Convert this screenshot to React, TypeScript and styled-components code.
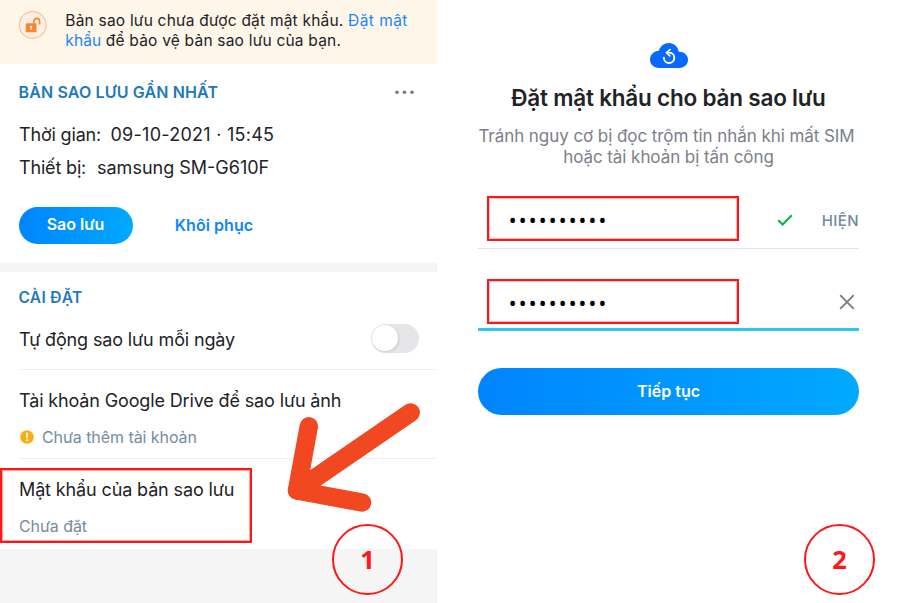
import React from 'react';
import styled, { createGlobalStyle, css } from 'styled-components';

const GlobalStyle = createGlobalStyle`
  * { box-sizing: border-box; }
  body {
    margin: 0;
    background: #fff;
    font-family: Inter, "Noto Sans", sans-serif;
    color: #222326;
  }
`;

const Screen = styled.div`
  position: relative;
  display: grid;
  grid-template-columns: 437px 463px;
  width: 900px;
  height: 603px;
  overflow: hidden;
`;

const BackupPanel = styled.section`
  display: flex;
  flex-direction: column;
  background: #f5f5f5;
`;

const Banner = styled.div`
  display: flex;
  height: 64px;
  padding: 11px 0 0 18px;
  background: #fef6e9;
`;

const LockBadge = styled.svg`
  flex: none;
  width: 30px;
  height: 30px;
  margin-right: 17.3px;
`;

const BannerText = styled.p`
  margin: 0;
  font-size: 15.5px;
  line-height: 19.5px;
  letter-spacing: 0.21px;
  white-space: nowrap;
`;

const BannerLink = styled.a<{ $track: number }>`
  color: #1a87f5;
  letter-spacing: ${(p) => p.$track}px;
`;

const Card = styled.div<{ $height: number; $top: number; $gap?: number }>`
  display: flex;
  flex-direction: column;
  height: ${(p) => p.$height}px;
  margin-top: ${(p) => p.$gap ?? 0}px;
  padding: ${(p) => p.$top}px 0 0 19px;
  background: #fff;
`;

const CardHeader = styled.div`
  display: flex;
  justify-content: space-between;
  align-items: center;
  padding-right: 23px;
  margin-bottom: 21px;
`;

const SectionTitle = styled.h2<{ $size: number; $track: number }>`
  margin: 0 0 0 -0.5px;
  font-size: ${(p) => p.$size}px;
  font-weight: 600;
  line-height: 20px;
  letter-spacing: ${(p) => p.$track}px;
  color: #2079ba;
`;

const MoreIcon = styled.svg`
  width: 19px;
  height: 5px;
`;

const InfoLine = styled.div`
  display: flex;
  height: 24px;
  margin-bottom: 9px;
  font-size: 18px;
  line-height: 24px;
  white-space: nowrap;
`;

const InfoLabel = styled.span<{ $width: number }>`
  width: ${(p) => p.$width}px;
  letter-spacing: -0.17px;
`;

const InfoValue = styled.span<{ $track?: number }>`
  letter-spacing: ${(p) => p.$track ?? 0}px;
`;

const Actions = styled.div`
  display: flex;
  align-items: center;
  margin-top: 17.5px;
`;

const pill = css`
  border: 0;
  border-radius: 24px;
  background: linear-gradient(90deg, #0084ff, #00a9ff);
  color: #fff;
  font: 600 16px Inter, "Noto Sans", sans-serif;
`;

const BackupButton = styled.button`
  ${pill}
  width: 114px;
  height: 37.5px;
  padding: 0 1px 2px 0;
`;

const RestoreButton = styled.button`
  border: 0;
  padding: 0;
  margin-left: 41.8px;
  background: none;
  color: #1286f7;
  font: 600 16px Inter, "Noto Sans", sans-serif;
  letter-spacing: 0.05px;
`;

const SettingRow = styled.div<{ $last?: boolean }>`
  display: flex;
  flex-direction: column;
  height: 90px;
  padding-top: 19px;
  border-bottom: ${(p) => (p.$last ? '0' : '1px solid #efeff1')};
`;

const ToggleRow = styled.div`
  display: flex;
  align-items: center;
  justify-content: space-between;
  height: 62px;
  padding-right: 18.5px;
  border-bottom: 1px solid #efeff1;
`;

const SettingName = styled.div<{ $track?: number; $drop?: number }>`
  padding-top: ${(p) => p.$drop ?? 0}px;
  font-size: 18px;
  line-height: 24px;
  letter-spacing: ${(p) => p.$track ?? -0.14}px;
  white-space: nowrap;
`;

const SettingState = styled.div`
  display: flex;
  align-items: center;
  gap: 8px;
  margin-top: 13px;
  font-size: 16px;
  line-height: 22px;
  letter-spacing: -0.07px;
  color: #768ca1;
`;

const WarnIcon = styled.svg`
  width: 14px;
  height: 14px;
  margin-left: 1px;
`;

const Toggle = styled.div`
  display: flex;
  align-items: center;
  width: 47.5px;
  height: 29px;
  padding-left: 1px;
  border-radius: 15px;
  background: #e6e6e8;
`;

const Knob = styled.div`
  width: 26px;
  height: 26px;
  border-radius: 50%;
  background: #fff;
  box-shadow: 1px 1px 3px rgba(0, 0, 0, 0.12);
`;

const PasswordPanel = styled.section`
  display: flex;
  flex-direction: column;
  align-items: center;
  padding: 43px 41px 0;
  background: #fff;
`;

const CloudIcon = styled.svg`
  width: 38px;
  height: 25px;
`;

const Heading = styled.h1`
  margin: 16px 0 14px;
  font-size: 22.5px;
  font-weight: 600;
  line-height: 28px;
  letter-spacing: -0.21px;
  white-space: nowrap;
`;

const Hint = styled.p`
  margin: 0 0 0 -4px;
  font-size: 17px;
  line-height: 21px;
  letter-spacing: -0.065px;
  text-align: center;
  white-space: nowrap;
  color: #7b7f89;
`;

const HintLine = styled.span<{ $shift?: number }>`
  display: block;
  padding-left: ${(p) => p.$shift ?? 0}px;
`;

const Field = styled.div<{ $active?: boolean }>`
  display: flex;
  align-items: flex-start;
  width: 381px;
  height: ${(p) => (p.$active ? 52 : 53)}px;
  margin-top: ${(p) => (p.$active ? 30 : 28)}px;
  padding-left: 9px;
  border-bottom: ${(p) => (p.$active ? '3px solid #2bc9ee' : '1px solid #e3e3e5')};
`;

const Frame = styled.div`
  display: flex;
  align-items: center;
  width: 252px;
  height: 45px;
  padding-left: 19.5px;
  border: 2px solid #ff1616;
  box-shadow: inset 0 0 0 1px rgba(255, 22, 22, 0.3);
`;

const Masked = styled.span`
  padding-top: 1px;
  font-family: "Open Sans", sans-serif;
  font-size: 22px;
  line-height: 22px;
  letter-spacing: 1.71px;
  color: #000;
`;

const CheckIcon = styled.svg`
  width: 16px;
  height: 12px;
  margin: 18px 0 0 38px;
`;

const ShowButton = styled.button`
  border: 0;
  padding: 0;
  margin: 15px 0 0 auto;
  background: none;
  color: #7189a0;
  font: 500 15px Inter, "Noto Sans", sans-serif;
  letter-spacing: 0.4px;
`;

const ClearIcon = styled.svg`
  width: 16px;
  height: 16px;
  margin: 14.5px 4px 0 auto;
`;

const ContinueButton = styled.button`
  ${pill}
  width: 381px;
  height: 47px;
  margin-top: 37px;
  padding: 0 0 1px;
`;

const Highlight = styled.div`
  position: absolute;
  left: 0;
  top: 468px;
  width: 252px;
  height: 75px;
  border: 2px solid #ff1616;
  box-shadow: inset 0 0 0 1px rgba(255, 22, 22, 0.4);
`;

const Arrow = styled.svg`
  position: absolute;
  left: 280px;
  top: 396px;
  width: 148px;
  height: 124px;
`;

const StepBadge = styled.div<{ $left: number; $top: number }>`
  position: absolute;
  left: ${(p) => p.$left}px;
  top: ${(p) => p.$top}px;
  display: flex;
  align-items: center;
  justify-content: center;
  width: 71px;
  height: 71px;
  padding-bottom: 2px;
  border: 2px solid #ff1616;
  border-radius: 50%;
  background: ${(p) => (p.$left > 437 ? '#fff' : 'linear-gradient(#fff 23px, #f5f5f5 23px)')};
  color: #ff1616;
  font: 700 25.5px "Open Sans", sans-serif;
`;

const MASK = '•'.repeat(10);

export default function App() {
  return (
    <Screen>
      <GlobalStyle />
      <BackupPanel>
        <Banner>
          <LockBadge viewBox="0 0 30 30">
            <circle cx="14.7" cy="14" r="13.4" fill="#fdeee4" stroke="#f8c09a" strokeWidth="1.1" />
            <rect x="7.8" y="12.3" width="10.7" height="9" rx="0.9" fill="#f6862f" />
            <path d="M16 12.6V10.2a2.8 2.8 0 0 1 5.6 0v3.2" fill="none" stroke="#f6862f" strokeWidth="1.6" />
            <circle cx="13.1" cy="15.8" r="1.1" fill="#fff" />
            <rect x="12.6" y="16" width="1" height="3" fill="#fff" />
          </LockBadge>
          <BannerText>
            Bản sao lưu chưa được đặt mật khẩu. <BannerLink $track={0.45}>Đặt mật</BannerLink>
            <br />
            <BannerLink $track={0.1}>khẩu</BannerLink> để bảo vệ bản sao lưu của bạn.
          </BannerText>
        </Banner>

        <Card $height={199} $top={18}>
          <CardHeader>
            <SectionTitle $size={16} $track={0.14}>BẢN SAO LƯU GẦN NHẤT</SectionTitle>
            <MoreIcon viewBox="0 0 19 5" fill="#757a82">
              <circle cx="2" cy="2.2" r="1.8" />
              <circle cx="9.5" cy="2.2" r="1.8" />
              <circle cx="17" cy="2.2" r="1.8" />
            </MoreIcon>
          </CardHeader>
          <InfoLine>
            <InfoLabel $width={91.5}>Thời gian:</InfoLabel>
            <InfoValue $track={0.26}>09-10-2021 · 15:45</InfoValue>
          </InfoLine>
          <InfoLine>
            <InfoLabel $width={78}>Thiết bị:</InfoLabel>
            <InfoValue>samsung SM-G610F</InfoValue>
          </InfoLine>
          <Actions>
            <BackupButton>Sao lưu</BackupButton>
            <RestoreButton>Khôi phục</RestoreButton>
          </Actions>
        </Card>

        <Card $height={277} $top={16} $gap={9}>
          <SectionTitle $size={15.5} $track={0.3}>CÀI ĐẶT</SectionTitle>
          <ToggleRow>
            <SettingName $drop={3}>Tự động sao lưu mỗi ngày</SettingName>
            <Toggle>
              <Knob />
            </Toggle>
          </ToggleRow>
          <SettingRow>
            <SettingName>Tài khoản Google Drive để sao lưu ảnh</SettingName>
            <SettingState>
              <WarnIcon viewBox="0 0 14 14">
                <circle cx="7" cy="7" r="6.8" fill="#f9ae13" />
                <path d="M7 3.3v4.4" stroke="#fff" strokeWidth="1.6" strokeLinecap="round" />
                <circle cx="7" cy="10.2" r="0.95" fill="#fff" />
              </WarnIcon>
              Chưa thêm tài khoản
            </SettingState>
          </SettingRow>
          <SettingRow $last>
            <SettingName $track={-0.13}>Mật khẩu của bản sao lưu</SettingName>
            <SettingState>Chưa đặt</SettingState>
          </SettingRow>
        </Card>
      </BackupPanel>

      <PasswordPanel>
        <CloudIcon viewBox="0 0 38 25">
          <path
            d="M9 25C3.8 25 0 21.5 0 16.6C0 11.8 3.8 7.9 8.8 7.7C10.5 3 14.3 0 19 0C24 0 28 3.6 28.7 8.7C34.2 8.7 38 12 38 16.8C38 21.5 34.3 25 29.4 25Z"
            fill="#0868ff"
          />
          <path d="M13.9 14.6a5.2 5.2 0 1 0 5.6-5h-2" fill="none" stroke="#fff" strokeWidth="1.9" strokeLinecap="round" />
          <path d="M20 6.6l-3.6 3l3.4 3.2" fill="none" stroke="#fff" strokeWidth="1.7" strokeLinecap="round" strokeLinejoin="round" />
        </CloudIcon>
        <Heading>Đặt mật khẩu cho bản sao lưu</Heading>
        <Hint>
          <HintLine>Tránh nguy cơ bị đọc trộm tin nhắn khi mất SIM</HintLine>
          <HintLine $shift={4}>hoặc tài khoản bị tấn công</HintLine>
        </Hint>
        <Field>
          <Frame>
            <Masked>{MASK}</Masked>
          </Frame>
          <CheckIcon viewBox="0 0 16 12">
            <path d="M1.2 6.2l4.4 4.3L14.8 1.2" fill="none" stroke="#12b04f" strokeWidth="2.2" />
          </CheckIcon>
          <ShowButton>HIỆN</ShowButton>
        </Field>
        <Field $active>
          <Frame>
            <Masked>{MASK}</Masked>
          </Frame>
          <ClearIcon viewBox="0 0 16 16">
            <path d="M1.2 1.2l13.6 13.6M14.8 1.2L1.2 14.8" stroke="#757f88" strokeWidth="1.9" />
          </ClearIcon>
        </Field>
        <ContinueButton>Tiếp tục</ContinueButton>
      </PasswordPanel>

      <Highlight />
      <Arrow viewBox="280 396 148 124" fill="none" stroke="#f24822" strokeWidth="18.5" strokeLinecap="round" strokeLinejoin="round">
        <path d="M308.8 426.3L297 490.5L362 502.5" />
        <path d="M297 490.5L410.7 412.5" />
      </Arrow>
      <StepBadge $left={332} $top={524}>1</StepBadge>
      <StepBadge $left={804} $top={524}>2</StepBadge>
    </Screen>
  );
}
